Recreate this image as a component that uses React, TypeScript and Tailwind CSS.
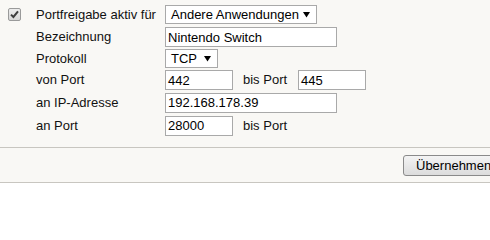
import React from "react";

const font = { fontFamily: '"Liberation Sans", Arial, sans-serif' };

function Checkbox() {
  return (
    <div className="w-[13px] h-[13px] rounded-[2px] border border-[#9a9a9a] bg-gradient-to-b from-[#ececec] to-[#d6d6d6] flex items-center justify-center">
      <svg width="9" height="9" viewBox="0 0 9 9">
        <path d="M1 4.6 L3.4 7 L8 1.4" fill="none" stroke="#3c3c3c" strokeWidth="2" />
      </svg>
    </div>
  );
}

function Select({ text, w }: { text: string; w: string }) {
  return (
    <div className={`${w} h-[19px] border border-[#a9a9a9] bg-white flex items-center pl-[5px] pr-[5px] justify-between text-black`}>
      <span className="leading-none">{text}</span>
      <svg width="7" height="7" viewBox="0 0 7 7" className="mr-[1px]">
        <path d="M0 1 L7 1 L3.5 6.5 Z" fill="#000" />
      </svg>
    </div>
  );
}

function Input({ value, w }: { value: string; w: string }) {
  return (
    <div className={`${w} h-[20px] border border-[#a9a9a9] bg-white flex items-center pl-[2px] text-black leading-none`}>
      {value}
    </div>
  );
}

export default function App() {
  return (
    <div className="w-[490px] h-[212px] overflow-hidden bg-white text-[13px] text-[#111]" style={font}>
      <div className="bg-[#f9f8f5] border-b border-[#c8c6c0] pt-[3px] h-[148px]">
        <div className="grid grid-cols-[36px_129px_1fr]">
          <div className="h-[23px] flex items-center pl-[8px]">
            <Checkbox />
          </div>
          <div className="h-[23px] flex items-center">Portfreigabe aktiv für</div>
          <div className="h-[23px] flex items-center">
            <Select text="Andere Anwendungen" w="w-[152px]" />
          </div>

          <div className="h-[22px]" />
          <div className="h-[22px] flex items-center">Bezeichnung</div>
          <div className="h-[22px] flex items-center">
            <Input value="Nintendo Switch" w="w-[172px]" />
          </div>

          <div className="h-[21px]" />
          <div className="h-[21px] flex items-center">Protokoll</div>
          <div className="h-[21px] flex items-center">
            <Select text="TCP" w="w-[53px]" />
          </div>

          <div className="h-[22px]" />
          <div className="h-[22px] flex items-center">von Port</div>
          <div className="h-[22px] flex items-center">
            <Input value="442" w="w-[68px]" />
            <span className="ml-[10px]">bis Port</span>
            <div className="ml-[11px]">
              <Input value="445" w="w-[68px]" />
            </div>
          </div>

          <div className="h-[23px]" />
          <div className="h-[23px] flex items-center">an IP-Adresse</div>
          <div className="h-[23px] flex items-center">
            <Input value="192.168.178.39" w="w-[172px]" />
          </div>

          <div className="h-[23px]" />
          <div className="h-[23px] flex items-center">an Port</div>
          <div className="h-[23px] flex items-center">
            <Input value="28000" w="w-[68px]" />
            <span className="ml-[10px]">bis Port</span>
          </div>
        </div>
      </div>
      <div className="bg-[#f9f8f5] border-b border-[#c8c6c0] h-[35px] flex items-center justify-end">
        <button
          className="-mr-[12px] h-[21px] w-[99px] rounded-[3px] border border-[#8a8a8a] bg-gradient-to-b from-[#f4f4f4] to-[#dcdcdc] text-[13px] text-black pl-[12px] text-left leading-none"
          style={font}
        >
          Übernehmen
        </button>
      </div>
    </div>
  );
}
